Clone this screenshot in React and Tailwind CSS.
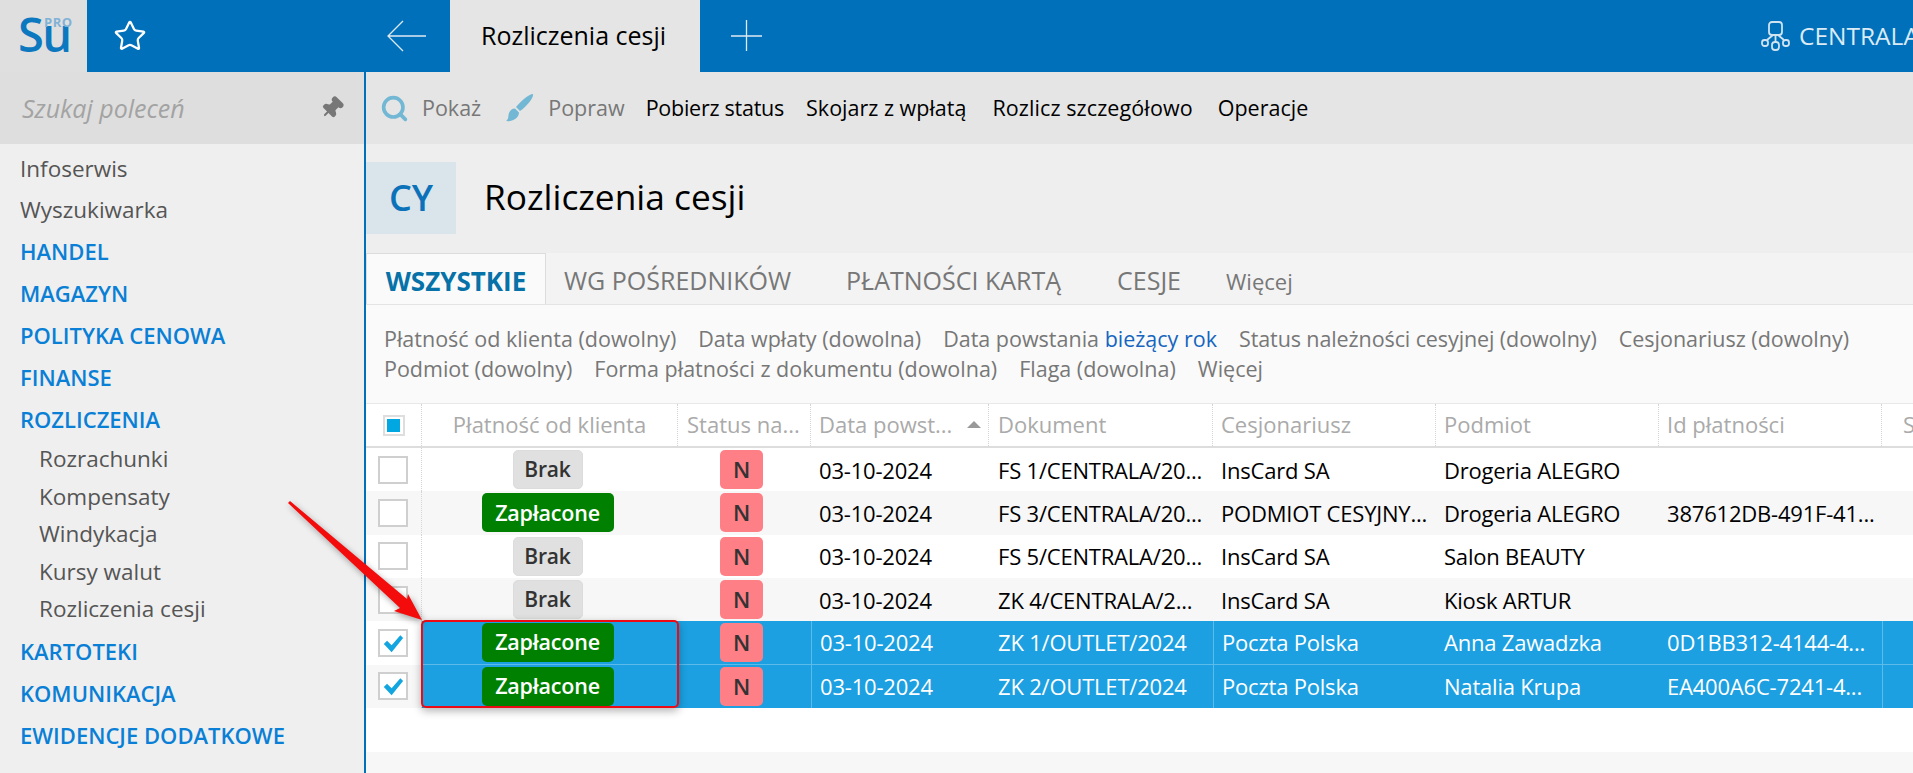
import React from 'react';
import { Star, Pin, Search } from 'lucide-react';

const navTop = ['HANDEL', 'MAGAZYN', 'POLITYKA CENOWA', 'FINANSE', 'ROZLICZENIA'];
const navSub = ['Rozrachunki', 'Kompensaty', 'Windykacja', 'Kursy walut', 'Rozliczenia cesji'];
const navBottom = ['KARTOTEKI', 'KOMUNIKACJA', 'EWIDENCJE DODATKOWE'];

const cols = 'grid grid-cols-[56px_256px_133px_178px_224px_223px_223px_223px_1fr]';

const rows = [
  { pay: 'Brak', doc: 'FS 1/CENTRALA/20...', ces: 'InsCard SA', sub: 'Drogeria ALEGRO', id: '' },
  { pay: 'Zapłacone', doc: 'FS 3/CENTRALA/20...', ces: 'PODMIOT CESYJNY...', sub: 'Drogeria ALEGRO', id: '387612DB-491F-41...' },
  { pay: 'Brak', doc: 'FS 5/CENTRALA/20...', ces: 'InsCard SA', sub: 'Salon BEAUTY', id: '' },
  { pay: 'Brak', doc: 'ZK 4/CENTRALA/2...', ces: 'InsCard SA', sub: 'Kiosk ARTUR', id: '' },
  { pay: 'Zapłacone', doc: 'ZK 1/OUTLET/2024', ces: 'Poczta Polska', sub: 'Anna Zawadzka', id: '0D1BB312-4144-4...', selected: true },
  { pay: 'Zapłacone', doc: 'ZK 2/OUTLET/2024', ces: 'Poczta Polska', sub: 'Natalia Krupa', id: 'EA400A6C-7241-4...', selected: true },
];

function PayBadge({ value }) {
  if (value === 'Brak') {
    return (
      <span className="flex h-[39px] w-[70px] items-center justify-center rounded-[5px] border border-[#dcdcdc] bg-[#e0e0e0] text-[21px] font-semibold text-[#333]">
        Brak
      </span>
    );
  }
  return (
    <span className="flex h-[39px] w-[132px] items-center justify-center rounded-[5px] bg-[#008000] text-[21.5px] font-semibold text-white">
      Zapłacone
    </span>
  );
}

function Row({ row, index }) {
  const even = index % 2 === 1;
  const cell = `flex items-center truncate pl-2 ${row.selected ? 'text-white' : 'pt-[1px] text-black'}`;
  return (
    <div className={`${cols} h-[43.33px] text-[22px] tracking-[-0.2px] ${even ? 'bg-[#f7f7f7]' : 'bg-white'}`}>
      <div className="flex items-center justify-center border-r border-dotted border-[#d5d5d5] pr-[2px]">
        <span className="flex h-[28px] w-[30px] items-center justify-center border-2 border-[#cfcfcf] bg-white">
          {row.selected && (
            <svg viewBox="0 0 24 24" className="h-[22px] w-[22px]">
              <path d="M2 13l3.500-3.500 5 5L20 3.500 23 6.500 10.500 22z" fill="#12a5e0" />
            </svg>
          )}
        </span>
      </div>
      <div className={`col-span-7 ${row.selected ? 'bg-[#1ca0e1]' : ''}`}>
        <div className={`grid h-full grid-cols-[256px_133px_178px_224px_223px_223px_223px] ${row.selected && index === 4 ? 'border-b border-[#5cbbe9]' : ''}`}>
          <div className="flex items-center justify-center pr-[5px]"><PayBadge value={row.pay} /></div>
          <div className="flex items-center justify-center pr-[6px]">
            <span className="flex h-[39px] w-[43px] items-center justify-center rounded-[5px] bg-[#ff7f87] text-[22px] font-semibold text-[#333]">N</span>
          </div>
          <div className={`${cell} ${row.selected ? 'border-l border-[#5cbbe9]' : ''}`}>03-10-2024</div>
          <div className={`${cell} pl-[9px]`}>{row.doc}</div>
          <div className={`${cell} ${row.selected ? 'border-l border-[#5cbbe9]' : ''}`}>{row.ces}</div>
          <div className={cell}>{row.sub}</div>
          <div className={cell}>{row.id}</div>
        </div>
      </div>
      <div className={row.selected ? `bg-[#1ca0e1] border-l border-[#5cbbe9] ${index === 4 ? 'border-b border-b-[#5cbbe9]' : ''}` : ''} />
    </div>
  );
}

export default function App() {
  return (
    <div className="relative h-screen w-full overflow-hidden bg-[#efefef] font-['Open_Sans',sans-serif]">
      {/* top bar */}
      <header className="flex h-[72px] bg-[#0070ba]">
        <div className="relative flex w-[87px] shrink-0 bg-[#dfdfdf]">
          <span className="pl-[18px] pt-[6px] text-[47px] font-semibold leading-[56px] tracking-[-1.5px] text-[#0b78bf]">Su</span>
          <span className="absolute left-[44px] top-[13px] text-[13px] font-bold leading-[18px] tracking-[0.5px] text-[#7fb2d6]">PRO</span>
        </div>
        <div className="flex w-[363px] shrink-0 items-center pl-[26px]">
          <Star size={34} strokeWidth={1.6} className="text-white" />
          <svg viewBox="0 0 40 32" className="ml-[239px] h-[32px] w-[40px]" fill="none" stroke="#dfeaf3" strokeWidth="1.3">
            <path d="M40 16H2M17 1L2 16l15 15" />
          </svg>
        </div>
        <div className="flex w-[250px] shrink-0 items-center bg-[#e5e5e5] pl-[31px] text-[25px] text-black">Rozliczenia cesji</div>
        <div className="flex items-center pl-[31px]">
          <svg viewBox="0 0 32 32" className="h-[32px] w-[32px]" fill="none" stroke="#dfeaf3" strokeWidth="1.3">
            <path d="M0 16h31M15.500 0v31" />
          </svg>
        </div>
        <div className="ml-auto flex w-[152px] items-center gap-[9px] overflow-hidden whitespace-nowrap text-[24.5px] text-[#dcebf5]">
          <svg viewBox="0 0 29 30" className="h-[30px] w-[29px] shrink-0" fill="none" stroke="#cfe3f1" strokeWidth="1.800">
            <rect x="8" y="1" width="13" height="13" rx="3" />
            <path d="M14.500 14v7M12 14l-6 5M17 14l6 5" />
            <rect x="1" y="19" width="6" height="6" rx="2.500" />
            <rect x="11" y="21" width="7" height="8" rx="3" />
            <rect x="22" y="19" width="6" height="6" rx="2.500" />
          </svg>
          CENTRALA
        </div>
      </header>

      <div className="flex h-[701px]">
        {/* side menu */}
        <aside className="w-[364px] shrink-0">
          <div className="flex h-[72px] items-center justify-between bg-[#dedede] pl-[22px] pr-[20px]">
            <span className="pt-[1px] text-[25px] italic text-[#a3a3a3]">Szukaj poleceń</span>
            <Pin size={24} fill="#777" className="rotate-45 text-[#777]" />
          </div>
          <nav className="pl-[20px] pt-[4px] text-[22.5px] text-[#555]">
            <div className="flex h-[41px] items-center">Infoserwis</div>
            <div className="flex h-[41px] items-center">Wyszukiwarka</div>
            {navTop.map((item) => (
              <div key={item} className="flex h-[42px] items-center text-[22px] font-semibold text-[#0a7fd6]">{item}</div>
            ))}
            <div>
              {navSub.map((item) => (
                <div key={item} className="flex h-[37.6px] items-center pl-[19px]">{item}</div>
              ))}
            </div>
            <div className="pt-[3px]">
              {navBottom.map((item) => (
                <div key={item} className="flex h-[42px] items-center text-[22px] font-semibold text-[#0a7fd6]">{item}</div>
              ))}
            </div>
          </nav>
        </aside>

        {/* main */}
        <main className="min-w-0 flex-1 border-l-2 border-[#0070ba]">
          <div className="flex h-[72px] items-center bg-[#e5e5e5] pl-[14px] text-[21.5px] text-black">
            <Search size={29} strokeWidth={3} className="text-[#72b7d3]" />
            <span className="ml-[13px] text-[#777]">Pokaż</span>
            <svg viewBox="0 0 28 28" className="ml-[25px] h-[28px] w-[28px]">
              <path d="M27 0c1 4-7 13-13 17l-4-4C15 7 23 0 27 0zM9 14.500l4 4C13 24 6 28 0 27c3-2 2-5 3-8 1-2.500 3-4.500 6-4.500z" fill="#72b7d3" />
            </svg>
            <span className="ml-[14px] text-[#777]">Popraw</span>
            <span className="ml-[21px] tracking-[-0.25px]">Pobierz status</span>
            <span className="ml-[22px]">Skojarz z wpłatą</span>
            <span className="ml-[26px] tracking-[0.1px]">Rozlicz szczegółowo</span>
            <span className="ml-[25px]">Operacje</span>
          </div>

          <div className="flex h-[109px] bg-[#eeeeee] pt-[18px]">
            <div className="flex h-[72px] w-[90px] items-center justify-center bg-[#d9e4eb] text-[36px] font-semibold text-[#0b72b9]">CY</div>
            <h1 className="ml-[28px] mt-[10px] text-[35.3px] leading-[48px] text-black">Rozliczenia cesji</h1>
          </div>

          {/* view tabs */}
          <div className="flex h-[51px] items-end bg-[#f3f3f3] text-[25px] text-[#777]">
            <div className="flex h-[51px] w-[180px] items-center justify-center border border-b-0 border-[#dcdcdc] bg-[#fafafa] pt-[5px] text-[26px] font-bold text-[#0672a8]">WSZYSTKIE</div>
            <div className="flex h-[51px] items-center pt-[5px]">
              <span className="ml-[18px]">WG POŚREDNIKÓW</span>
              <span className="ml-[55px]">PŁATNOŚCI KARTĄ</span>
              <span className="ml-[56px]">CESJE</span>
              <span className="ml-[45px] text-[22px]">Więcej</span>
            </div>
          </div>

          {/* filters */}
          <div className="h-[99px] border-t border-[#e4e4e4] bg-[#fafafa] pl-[18px] pt-[19px] text-[21.5px] leading-[30px] text-[#777]">
            <div className="flex gap-[22px] whitespace-nowrap">
              <span>Płatność od klienta (dowolny)</span>
              <span>Data wpłaty (dowolna)</span>
              <span>Data powstania <span className="text-[#1565c0]">bieżący rok</span></span>
              <span className="tracking-[-0.1px]">Status należności cesyjnej (dowolny)</span>
              <span>Cesjonariusz (dowolny)</span>
            </div>
            <div className="flex gap-[22px] whitespace-nowrap">
              <span>Podmiot (dowolny)</span>
              <span>Forma płatności z dokumentu (dowolna)</span>
              <span>Flaga (dowolna)</span>
              <span>Więcej</span>
            </div>
          </div>

          {/* table */}
          <div className="h-[349px] bg-white">
            <div className={`${cols} h-[45px] border-y border-b-2 border-[#e8e8e8] border-b-[#dddddd] text-[22px] text-[#aaaaaa]`}>
              <div className="flex items-center justify-center border-r border-dotted border-[#d5d5d5]">
                <span className="flex h-[21px] w-[22px] items-center justify-center border-2 border-[#dedede]">
                  <span className="h-[13px] w-[13px] bg-[#00a7e1]" />
                </span>
              </div>
              <div className="flex items-center justify-center border-r border-dotted border-[#d5d5d5] pb-[2px]">Płatność od klienta</div>
              <div className="flex items-center overflow-hidden whitespace-nowrap border-r border-dotted border-[#d5d5d5] pb-[2px] pl-[9px]">Status na...</div>
              <div className="flex items-center justify-between overflow-hidden whitespace-nowrap border-r border-dotted border-[#d5d5d5] pb-[2px] pl-2 pr-[7px]">
                Data powst...
                <span className="h-0 w-0 shrink-0 border-x-[7px] border-b-[7px] border-x-transparent border-b-[#999]" />
              </div>
              <div className="flex items-center border-r border-dotted border-[#d5d5d5] pb-[2px] pl-[9px]">Dokument</div>
              <div className="flex items-center border-r border-dotted border-[#d5d5d5] pb-[2px] pl-2">Cesjonariusz</div>
              <div className="flex items-center border-r border-dotted border-[#d5d5d5] pb-[2px] pl-2">Podmiot</div>
              <div className="flex items-center border-r border-dotted border-[#d5d5d5] pb-[2px] pl-2">Id płatności</div>
              <div className="flex items-center overflow-hidden pb-[2px] pl-[21px]">S</div>
            </div>
            {rows.map((row, index) => (
              <Row key={row.doc} row={row} index={index} />
            ))}
            <div className="h-[44px]" />
          </div>
          <div className="h-[21px] bg-[#f7f7f7]" />
        </main>
      </div>

      {/* annotation */}
      <div className="absolute left-[421px] top-[620px] h-[88px] w-[258px] rounded-[5px] border-[2.5px] border-[#ee0a14] shadow-[0_3px_8px_rgba(0,0,0,0.3)]" />
      <svg className="absolute left-[280px] top-[495px] h-[135px] w-[150px] drop-shadow-[2px_3px_3px_rgba(0,0,0,0.35)]" viewBox="0 0 150 135">
        <path d="M10 6L127 104l1-5 14 26-28-9 6-3L8 8z" fill="#f40b0b" />
      </svg>
    </div>
  );
}
